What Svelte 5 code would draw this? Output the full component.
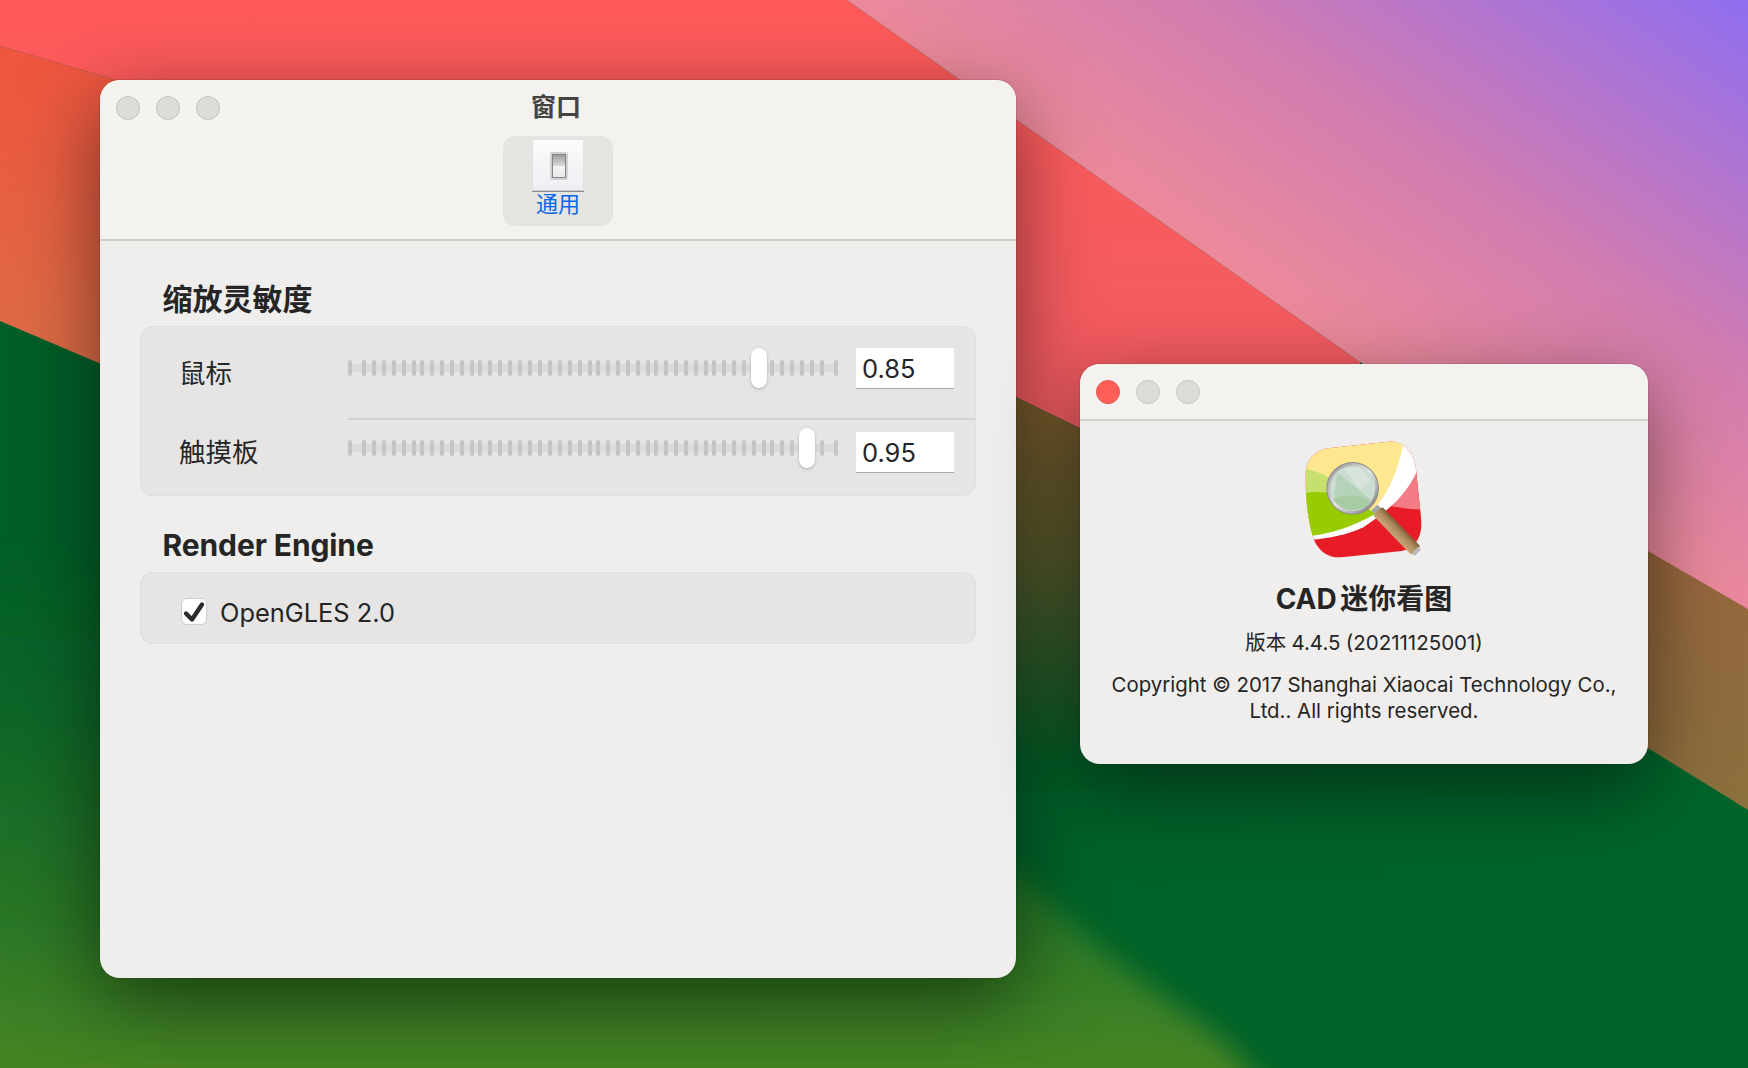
<script lang="ts">
  const tickLefts = [0];
  for (let k = 0; k < 48; k++) {
    const x = 14 + Math.floor(k / 6) * 58.4 + (k % 6) * 10;
    tickLefts.push(Math.round(x / 2) * 2);
  }
  tickLefts.push(486);

  const sliders = [
    { label: '鼠标', value: '0.85', thumb: 403 },
    { label: '触摸板', value: '0.95', thumb: 451 }
  ];
</script>

<div class="desktop">
  <svg class="wallpaper" width="1748" height="1068" viewBox="0 0 1748 1068" aria-hidden="true">
    <defs>
      <linearGradient id="base" x1="0" y1="0" x2="1" y2="0">
        <stop offset="0" stop-color="#005e28" />
        <stop offset="1" stop-color="#00642a" />
      </linearGradient>
      <linearGradient id="moss" gradientUnits="userSpaceOnUse" x1="0" y1="540" x2="0" y2="1068">
        <stop offset="0" stop-color="#4c8a24" stop-opacity="0" />
        <stop offset="0.35" stop-color="#4c8a24" stop-opacity="0.18" />
        <stop offset="0.72" stop-color="#4c8a24" stop-opacity="0.54" />
        <stop offset="1" stop-color="#468424" />
      </linearGradient>
      <linearGradient id="red" gradientUnits="userSpaceOnUse" x1="0" y1="0" x2="0" y2="440">
        <stop offset="0" stop-color="#ff5a5a" />
        <stop offset="1" stop-color="#f05c62" />
      </linearGradient>
      <linearGradient id="orange" gradientUnits="userSpaceOnUse" x1="0" y1="50" x2="0" y2="360">
        <stop offset="0" stop-color="#f0553f" />
        <stop offset="1" stop-color="#dc6c46" />
      </linearGradient>
      <linearGradient id="pink" gradientUnits="userSpaceOnUse" x1="1250" y1="280" x2="1541" y2="-142">
        <stop offset="0" stop-color="#ec8a9c" />
        <stop offset="0.4" stop-color="#d27cb0" />
        <stop offset="1" stop-color="#8f6ef0" />
      </linearGradient>
      <linearGradient id="umberLeft" gradientUnits="userSpaceOnUse" x1="0" y1="397" x2="0" y2="770">
        <stop offset="0" stop-color="#7a5a2c" />
        <stop offset="0.42" stop-color="#56582c" />
        <stop offset="0.76" stop-color="#245a28" />
        <stop offset="1" stop-color="#005f26" />
      </linearGradient>
      <linearGradient id="umberRight" gradientUnits="userSpaceOnUse" x1="1650" y1="560" x2="1748" y2="810">
        <stop offset="0" stop-color="#98663e" />
        <stop offset="1" stop-color="#8a713e" />
      </linearGradient>
      <filter id="soft" x="-10%" y="-10%" width="120%" height="120%">
        <feGaussianBlur stdDeviation="14" />
      </filter>
    </defs>
    <rect width="1748" height="1068" fill="url(#base)" />
    <path d="M-100 500L900 500L1000 860L1115 960L1226 1043L1300 1130L-100 1130Z" fill="url(#moss)" filter="url(#soft)" />
    <path d="M0 46L120 81L120 372L0 321Z" fill="url(#orange)" />
    <path d="M0 0L847 0L1360 362L1360 520L1090 433L1016 397L120 81L0 46Z" fill="url(#red)" />
    <path d="M900 340L1016 397L1100 438L1100 790L900 790Z" fill="url(#umberLeft)" />
    <path d="M1630 480L1748 560L1748 810L1630 737Z" fill="url(#umberRight)" />
    <path d="M847 0L1748 0L1748 609L1648 551L1360 362Z" fill="url(#pink)" />
  </svg>

  <section class="window main">
    <header class="bar">
      <div class="title-row">
        <div class="lights">
          <span class="light"></span><span class="light"></span><span class="light"></span>
        </div>
        <div class="title">窗口</div>
      </div>
      <button class="tool">
        <svg class="tool-icon" width="52" height="52" viewBox="0 0 52 52" aria-hidden="true">
          <defs>
            <linearGradient id="plate" x1="0" y1="0" x2="0" y2="1">
              <stop offset="0" stop-color="#fbfbfb" />
              <stop offset="1" stop-color="#eeeff3" />
            </linearGradient>
            <linearGradient id="rocker" x1="0" y1="0" x2="0" y2="1">
              <stop offset="0" stop-color="#9c9c9c" />
              <stop offset="0.5" stop-color="#dadada" />
              <stop offset="0.52" stop-color="#f3f3f5" />
              <stop offset="1" stop-color="#e8e8ec" />
            </linearGradient>
          </defs>
          <rect x="0" y="0" width="52" height="51" fill="url(#plate)" />
          <rect x="0" y="50.6" width="52" height="1.4" fill="#8c8c8a" />
          <rect x="0" y="0" width="0.8" height="51" fill="#dcdcdc" />
          <rect x="51.2" y="0" width="0.8" height="51" fill="#dcdcdc" />
          <rect x="18" y="12" width="18" height="28" rx="2" fill="#d2d2d2" />
          <rect x="20.5" y="14.5" width="13" height="23" fill="url(#rocker)" stroke="#858585" stroke-width="1" />
        </svg>
        <span class="tool-label">通用</span>
      </button>
    </header>

    <div class="content">
      <h2>缩放灵敏度</h2>
      <div class="group">
        {#each sliders as s, i}
          {#if i > 0}<div class="sep"></div>{/if}
          <div class="row" class:second={i > 0}>
            <span class="label">{s.label}</span>
            <div class="slider">
              <div class="track"></div>
              {#each tickLefts as left}
                <i class="tick" style="left: {left}px"></i>
              {/each}
              <b class="thumb" style="left: {s.thumb}px"></b>
            </div>
            <input class="num" value={s.value} readonly />
          </div>
        {/each}
      </div>

      <h2 class="next">Render Engine</h2>
      <div class="group check-group">
        <span class="check">
          <svg width="26" height="27" viewBox="0 0 26 27" aria-hidden="true">
            <path d="M5 15.5L11 21.5L21 6.5" fill="none" stroke="#2b2b2b" stroke-width="4.4" stroke-linecap="round" stroke-linejoin="round" />
          </svg>
        </span>
        <span class="check-text">OpenGLES 2.0</span>
      </div>
    </div>
  </section>

  <section class="window about">
    <header class="about-bar">
      <div class="lights">
        <span class="light close"></span><span class="light"></span><span class="light"></span>
      </div>
    </header>
    <div class="about-body">
      <svg class="logo" width="200" height="150" viewBox="0 0 600 450" aria-hidden="true">
        <defs>
          <clipPath id="tile">
            <path d="M137 165C137 120 165 92 205 85L385 65C430 62 458 95 467 140L484 300C488 350 465 385 425 393L245 412C205 415 178 395 162 360C145 310 135 230 137 165Z" />
          </clipPath>
          <linearGradient id="ring" x1="0" y1="0" x2="1" y2="1">
            <stop offset="0" stop-color="#8a8a8a" />
            <stop offset="0.5" stop-color="#e4e4e4" />
            <stop offset="1" stop-color="#6f6f6f" />
          </linearGradient>
          <linearGradient id="wood" x1="0" y1="0" x2="1" y2="0">
            <stop offset="0" stop-color="#c9a578" />
            <stop offset="0.55" stop-color="#b08c5e" />
            <stop offset="1" stop-color="#7d5f38" />
          </linearGradient>
        </defs>
        <g clip-path="url(#tile)">
          <rect x="120" y="50" width="380" height="380" fill="#e81c26" />
          <path d="M120 50L500 50L500 268C450 270 420 262 390 258L470 150L420 50Z" fill="#f27b86" />
          <path d="M432 50L500 50L470 155C440 220 395 265 310 322C260 345 210 355 150 360L120 340Z" fill="#fff" />
          <path d="M120 50L434 50C420 130 395 215 330 280C270 325 210 340 150 348L120 300Z" fill="#ffe78f" />
          <path d="M120 145C160 150 190 160 215 180L345 280C270 325 210 340 155 347L120 300Z" fill="#c5e06d" />
          <path d="M120 222C180 208 260 215 345 282C270 325 210 340 155 347L120 300Z" fill="#99cc00" />
        </g>
        <g transform="rotate(-44 345 265)">
          <rect x="332" y="262" width="26" height="18" fill="#a6a6a6" />
          <rect x="326" y="276" width="38" height="166" rx="8" fill="url(#wood)" />
          <rect x="331" y="438" width="28" height="12" rx="4" fill="#b9b9b9" />
        </g>
        <circle cx="278" cy="205" r="79" fill="#8c8c8c" />
        <circle cx="278" cy="205" r="76" fill="url(#ring)" />
        <circle cx="278" cy="205" r="68" fill="#cbdcd2" />
        <path d="M232 158C262 180 300 210 332 240C300 282 245 280 222 240Z" fill="#b5d3b8" />
        <path d="M222 238C260 218 300 228 330 244C310 276 250 284 222 238Z" fill="#a7cba3" />
        <path d="M252 146L300 142L330 180L300 210Z" fill="#d8e4db" />
      </svg>
      <h1>CAD 迷你看图</h1>
      <p class="version">版本 4.4.5 (20211125001)</p>
      <p class="copy">Copyright © 2017 Shanghai Xiaocai Technology Co., Ltd.. All rights reserved.</p>
    </div>
  </section>
</div>

<style>
  :global(body) { margin: 0; font-family: Inter, "Noto Sans CJK SC", sans-serif; }
  .desktop { position: relative; width: 1748px; height: 1068px; overflow: hidden; color: #252525; }
  .wallpaper { position: absolute; inset: 0; display: block; }

  .window { position: absolute; box-sizing: border-box; background: #efeeec; border-radius: 20px; overflow: hidden;
    box-shadow: 0 24px 80px rgba(0, 0, 0, 0.5), 0 0 0 1px rgba(0, 0, 0, 0.08); }
  .main { left: 100px; top: 80px; width: 916px; height: 898px; }
  .about { left: 1080px; top: 364px; width: 568px; height: 400px; }

  .lights { display: flex; gap: 16px; }
  .light { width: 24px; height: 24px; box-sizing: border-box; border-radius: 50%; background: #dcdbd7; border: 1px solid #c4c3bf; }
  .light.close { background: #ff5f57; border-color: #e5534c; }

  .bar { box-sizing: border-box; height: 161px; background: #f3f2ee; border-bottom: 2px solid #cfcec9; display: flex; flex-direction: column; align-items: center; }
  .title-row { position: relative; width: 100%; height: 56px; display: flex; align-items: center; justify-content: center; }
  .title-row .lights { position: absolute; left: 16px; top: 16px; }
  .title { font-size: 25px; font-weight: 700; color: #444; margin: 0 4px 6px 0; }
  .tool { width: 110px; height: 90px; padding: 4px 0 0; border: 0; border-radius: 12px; background: #e5e4e0; display: flex; flex-direction: column; align-items: center; font: inherit; }
  .tool-icon { display: block; }
  .tool-label { margin-top: -1px; font-size: 22px; line-height: 26px; color: #0a68e6; }

  .content { padding: 0 40px; }
  h2 { margin: 0 0 7px; padding: 38px 0 0 22.5px; font-size: 30px; line-height: 40px; font-weight: 700; color: #252525; }
  h2.next { padding-top: 29px; letter-spacing: -0.1px; }

  .group { box-sizing: border-box; background: #e6e5e3; border: 1px solid #e0dfdd; border-radius: 12px; }
  .row { display: flex; align-items: flex-start; height: 91px; padding: 21px 0 0 38px; box-sizing: border-box; }
  .row.second { height: 75px; padding-top: 8px; }
  .sep { height: 2px; margin-left: 207px; background: #d2d1cf; }
  .label { width: 169px; margin-top: 10px; font-size: 26.5px; line-height: 30px; }
  .row.second .label { margin-top: 9px; }
  .slider { position: relative; width: 490px; height: 40px; flex: none; }
  .track { position: absolute; left: 0; right: 0; top: 16px; height: 8px; background: #dcdbd9; }
  .tick { position: absolute; top: 12px; width: 4px; height: 16px; border-radius: 2px; background: #c6c5c3; }
  .thumb { position: absolute; top: 0; width: 16px; height: 40px; border-radius: 8px; background: #fff; box-shadow: 0 1px 3px rgba(0, 0, 0, 0.25); }
  .num { width: 98px; height: 41px; margin-left: 18px; padding: 0 0 0 6px; box-sizing: border-box; border: 0; border-bottom: 1px solid #aaa; border-radius: 0; background: #fff; font: 25.5px Inter, sans-serif; color: #252525; outline: none; }
  .row.second .num { margin-top: 4px; }

  .check-group { height: 72px; padding: 25px 0 0 40px; display: flex; align-items: flex-start; gap: 13px; }
  .check { width: 26px; height: 27px; box-sizing: border-box; background: #fff; border: 1px solid #d0cfcd; border-radius: 6px; position: relative; }
  .check svg { position: absolute; left: -1px; top: -1px; display: block; }
  .check-text { font-size: 25.4px; line-height: 30px; }

  .about-bar { box-sizing: border-box; height: 57px; padding: 16px 0 0 16px; background: #f3f2ee; border-bottom: 2px solid #d2d1cc; }
  .about-body { display: flex; flex-direction: column; align-items: center; text-align: center; }
  .logo { display: block; margin: -1px 8px 0 0; }
  h1 { margin: 11px 0 0; font-size: 28px; line-height: 36px; font-weight: 700; word-spacing: -3px; }
  .version { margin: 13px 0 0; font-size: 20.5px; line-height: 26px; word-spacing: -0.5px; }
  .copy { margin: 16px 0 0; width: 540px; font-size: 20.4px; line-height: 26px; }
</style>
